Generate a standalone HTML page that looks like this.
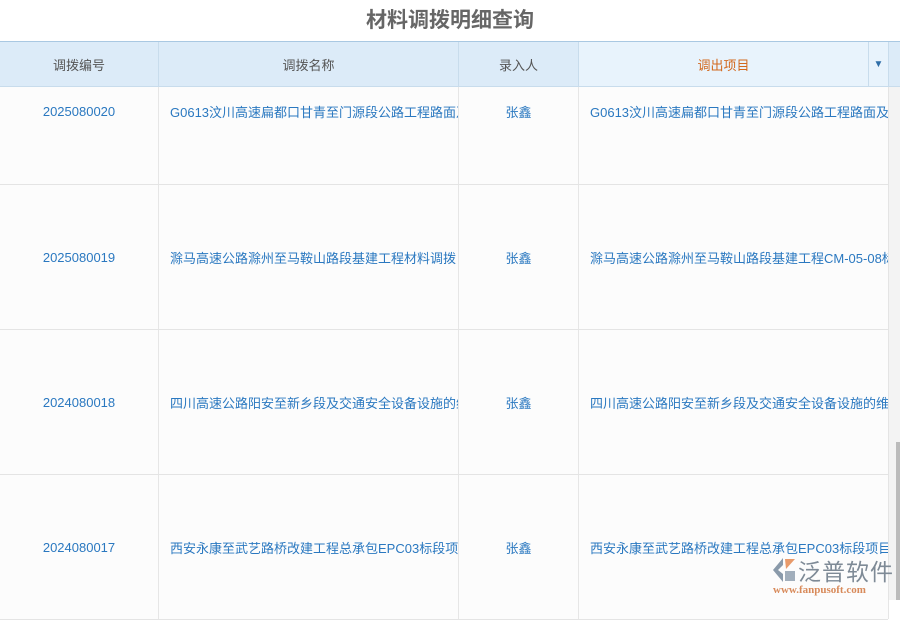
<!DOCTYPE html>
<html><head><meta charset="utf-8"><style>
*{margin:0;padding:0;box-sizing:border-box}
body{width:900px;height:600px;overflow:hidden;background:#fff;font-family:"Liberation Sans","Noto Sans CJK SC",sans-serif;position:relative}
.title{position:absolute;top:4px;left:0;width:900px;text-align:center;font-size:21px;font-weight:bold;color:#666;z-index:3;background:#fff;height:37px}
.hdr{position:absolute;top:41px;left:0;width:900px;height:46px;background:#dcebf8;border-top:1px solid #a9c8e2;border-bottom:1px solid #c8dcec;z-index:3}
.c{position:absolute;top:0;height:100%;display:flex;align-items:center;justify-content:center;font-size:13px;color:#555;border-right:1px solid #c8dcec;white-space:nowrap;overflow:hidden}
.row{position:absolute;left:0;width:888px;background:#fcfcfc;border-bottom:1px solid #e4e4e4}
.row .c{border-right:1px solid #e6e6e6;color:#2a78c0;font-size:13px}
.l{justify-content:flex-start!important;padding-left:11px}
</style></head><body>
<div style="position:absolute;top:0;left:0;width:900px;height:41px;background:#fff;z-index:2"></div>
<div class="title">材料调拨明细查询</div>
<div class="hdr">
<div class="c" style="left:0;width:159px">调拨编号</div>
<div class="c" style="left:159px;width:300px">调拨名称</div>
<div class="c" style="left:459px;width:120px">录入人</div>
<div class="c" style="left:579px;width:290px;background:#e8f3fc;color:#d2691e">调出项目</div>
<div class="c" style="left:869px;width:20px;background:#e8f3fc;color:#2f6ea8;font-size:10px">▼</div>
<div class="c" style="left:889px;width:11px;border:none"></div>
</div>
<div class="row" style="top:39px;height:146px">
<div class="c" style="left:0;width:159px">2025080020</div>
<div class="c l" style="left:159px;width:300px">G0613汶川高速扁都口甘青至门源段公路工程路面及</div>
<div class="c" style="left:459px;width:120px">张鑫</div>
<div class="c l" style="left:579px;width:310px">G0613汶川高速扁都口甘青至门源段公路工程路面及</div>
</div>
<div class="row" style="top:185px;height:145px">
<div class="c" style="left:0;width:159px">2025080019</div>
<div class="c l" style="left:159px;width:300px">滁马高速公路滁州至马鞍山路段基建工程材料调拨</div>
<div class="c" style="left:459px;width:120px">张鑫</div>
<div class="c l" style="left:579px;width:310px">滁马高速公路滁州至马鞍山路段基建工程CM-05-08标</div>
</div>
<div class="row" style="top:330px;height:145px">
<div class="c" style="left:0;width:159px">2024080018</div>
<div class="c l" style="left:159px;width:300px">四川高速公路阳安至新乡段及交通安全设备设施的维</div>
<div class="c" style="left:459px;width:120px">张鑫</div>
<div class="c l" style="left:579px;width:310px">四川高速公路阳安至新乡段及交通安全设备设施的维</div>
</div>
<div class="row" style="top:475px;height:145px">
<div class="c" style="left:0;width:159px">2024080017</div>
<div class="c l" style="left:159px;width:300px">西安永康至武艺路桥改建工程总承包EPC03标段项目</div>
<div class="c" style="left:459px;width:120px">张鑫</div>
<div class="c l" style="left:579px;width:310px">西安永康至武艺路桥改建工程总承包EPC03标段项目</div>
</div>
<div style="position:absolute;left:888px;top:87px;width:12px;height:513px;background:#f3f3f3;border-left:1px solid #e4e4e4"></div>
<div style="position:absolute;left:896px;top:442px;width:4px;height:158px;background:#bbb"></div>
<svg style="position:absolute;left:769px;top:556px" width="28" height="28" viewBox="0 0 28 28">
<path d="M14 2 L4 14 L14 26 L14 18 L9 14 L14 9 Z" fill="#8a9aaa"/>
<path d="M16 3 L26 3 L17 13 Z" fill="#e89a6a"/>
<path d="M16 15 L26 15 L26 25 L16 25 Z" fill="#8a9aaa" opacity=".8"/>
</svg>
<div style="position:absolute;left:798px;top:553px;font-size:23px;color:#7e8a96;font-family:'Noto Sans CJK SC',sans-serif;letter-spacing:1px">泛普软件</div>
<div style="position:absolute;left:773px;top:584px;font-size:11px;color:#d88a5a;font-family:'Liberation Serif',serif;font-weight:bold">www.fanpusoft.com</div>
</body></html>
